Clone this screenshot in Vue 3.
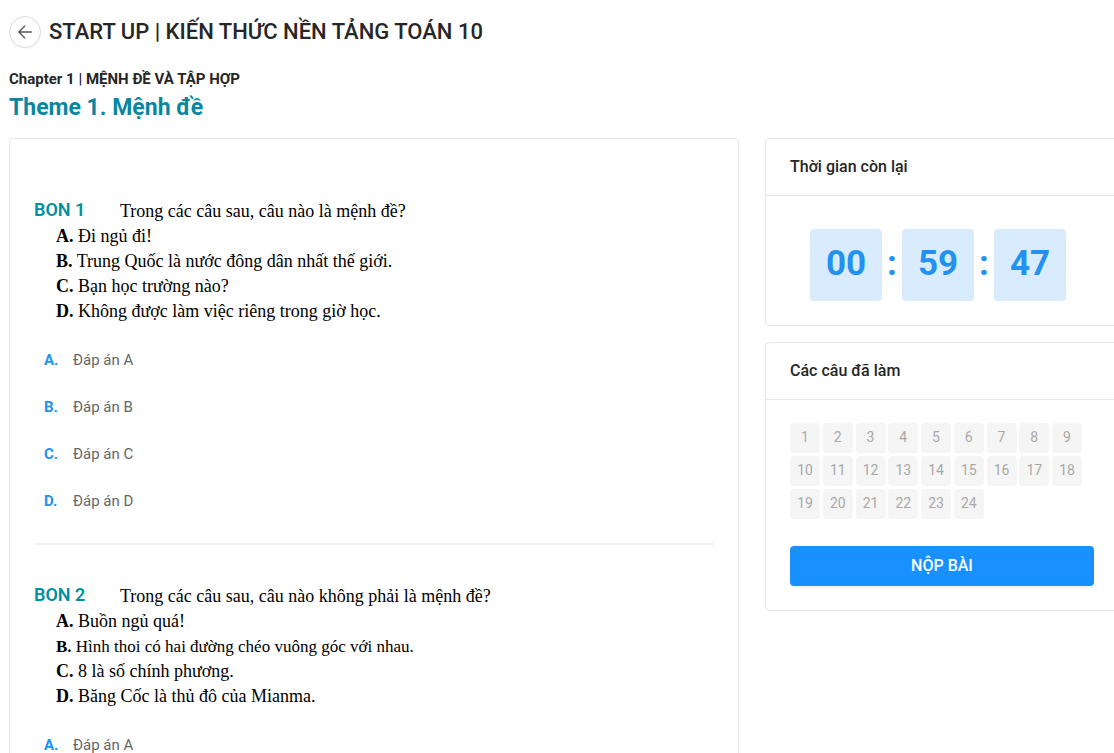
<script setup>
import { ref } from 'vue'

const letters = ['A', 'B', 'C', 'D']

const questions = [
  {
    id: 1,
    text: 'Trong các câu sau, câu nào là mệnh đề?',
    statements: [
      { text: 'Đi ngủ đi!' },
      { text: 'Trung Quốc là nước đông dân nhất thế giới.' },
      { text: 'Bạn học trường nào?' },
      { text: 'Không được làm việc riêng trong giờ học.' }
    ],
    options: ['A', 'B', 'C', 'D']
  },
  {
    id: 2,
    text: 'Trong các câu sau, câu nào không phải là mệnh đề?',
    statements: [
      { text: 'Buồn ngủ quá!' },
      { text: 'Hình thoi có hai đường chéo vuông góc với nhau.', compact: true },
      { text: '8 là số chính phương.' },
      { text: 'Băng Cốc là thủ đô của Mianma.' }
    ],
    options: ['A']
  }
]

const answers = ref({})
const questionCount = 24
</script>

<template>
  <div class="page">
    <header class="page-header">
      <button class="back" type="button" aria-label="Quay lại">
        <svg viewBox="0 0 16 16" width="16" height="16" aria-hidden="true">
          <path d="M8 1.8 1.8 8 8 14.2M1.8 8H14.8" />
        </svg>
      </button>
      <h1>START UP | KIẾN THỨC NỀN TẢNG TOÁN 10</h1>
    </header>

    <p class="chapter">Chapter 1 | MỆNH ĐỀ VÀ TẬP HỢP</p>
    <h2 class="theme">Theme 1. Mệnh đề</h2>

    <div class="columns">
      <main class="card questions">
        <section v-for="q in questions" :key="q.id" class="question">
          <div class="prompt">
            <p class="prompt-line">
              <strong class="tag">BON {{ q.id }}</strong>
              <span>{{ q.text }}</span>
            </p>
            <p
              v-for="(s, i) in q.statements"
              :key="i"
              class="statement"
              :class="{ compact: s.compact }"
            >
              <b>{{ letters[i] }}.</b> {{ s.text }}
            </p>
          </div>
          <div class="options">
            <button
              v-for="l in q.options"
              :key="l"
              type="button"
              class="option"
              :aria-pressed="answers[q.id] === l"
              @click="answers[q.id] = l"
            >
              <span class="letter">{{ l }}.</span>
              <span>Đáp án {{ l }}</span>
            </button>
          </div>
        </section>
      </main>

      <aside class="side">
        <section class="card">
          <h3>Thời gian còn lại</h3>
          <div class="card-body">
            <div class="timer">
              <span class="digits">00</span>
              <span class="colon">:</span>
              <span class="digits">59</span>
              <span class="colon">:</span>
              <span class="digits">47</span>
            </div>
          </div>
        </section>

        <section class="card">
          <h3>Các câu đã làm</h3>
          <div class="card-body progress">
            <div class="numbers">
              <button
                v-for="n in questionCount"
                :key="n"
                type="button"
                class="number"
                :class="{ done: answers[n] }"
              >{{ n }}</button>
            </div>
            <button class="submit" type="button">NỘP BÀI</button>
          </div>
        </section>
      </aside>
    </div>
  </div>
</template>

<style>
html,
body {
  background: #fff;
}
body {
  height: 100vh;
  overflow: hidden;
}
</style>

<style scoped>
.page {
  padding: 16px 0 0 9px;
  color: #262626;
  font-family: Roboto, "Liberation Sans", sans-serif;
  font-size: 15px;
}
h1,
h2,
h3,
p {
  margin: 0;
}
button {
  font-family: inherit;
  cursor: pointer;
}
.page-header {
  display: flex;
  align-items: center;
  gap: 8px;
  height: 32px;
}
.back {
  box-sizing: border-box;
  display: flex;
  align-items: center;
  justify-content: center;
  width: 32px;
  height: 32px;
  padding: 0;
  border: 1px solid #d9d9d9;
  border-radius: 50%;
  background: #fff;
  box-shadow: 0 2px 0 rgba(0, 0, 0, 0.015);
}
.back svg {
  fill: none;
  stroke: #555;
  stroke-width: 1.3;
}
h1 {
  font-size: 22px;
  font-weight: 500;
  line-height: 32px;
}
.chapter {
  margin-top: 20px;
  font-size: 15px;
  font-weight: 700;
  line-height: 22px;
}
.theme {
  color: #0887a0;
  font-size: 23px;
  font-weight: 700;
  line-height: 36px;
}
.columns {
  display: grid;
  grid-template-columns: 730fr 354fr;
  align-items: start;
  gap: 26px;
  margin-top: 12px;
  margin-right: -5px;
}
.card {
  border: 1px solid #e8e8e8;
  border-radius: 4px;
  background: #fff;
}
.questions {
  padding: 60px 24px 24px;
}
.question + .question {
  margin-top: 19px;
  padding-top: 39px;
  border-top: 2px solid #f0f0f0;
}
.prompt {
  color: #000;
  font-family: "Palatino Linotype", Palatino, "Liberation Serif", serif;
  font-size: 18px;
  line-height: 25px;
}
.prompt-line {
  display: flex;
}
.tag {
  flex: 0 0 86px;
  color: #0090a0;
  font-family: Roboto, sans-serif;
  font-size: 18px;
  font-weight: 600;
  line-height: 22px;
}
.statement {
  padding-left: 22px;
}
.compact {
  font-size: 17px;
}
.options {
  display: grid;
  margin-top: 12px;
}
.option {
  display: flex;
  align-items: center;
  height: 47px;
  padding: 0 10px;
  border: 0;
  background: none;
  color: #666;
  font-size: 15px;
  text-align: left;
}
.letter {
  flex: 0 0 29px;
  color: #2391f0;
  font-weight: 700;
}
.side {
  display: grid;
  gap: 16px;
}
h3 {
  padding: 16px 24px;
  border-bottom: 1px solid #e8e8e8;
  font-size: 16px;
  font-weight: 500;
  line-height: 24px;
}
.card-body {
  padding: 24px;
}
.progress {
  padding-top: 23px;
}
.timer {
  display: flex;
  padding: 9px 0 0 20px;
  color: #2391f0;
  font-size: 35px;
  font-weight: 700;
  line-height: 70px;
  text-align: center;
}
.digits {
  width: 72px;
  height: 72px;
  border-radius: 4px;
  background: #d9ecff;
}
.colon {
  width: 20px;
}
.numbers {
  display: grid;
  grid-template-columns: repeat(9, 30px);
  justify-content: space-between;
  row-gap: 3px;
  max-width: 292px;
}
.number {
  height: 30px;
  padding: 0 0 2px;
  border: 0;
  border-radius: 4px;
  background: #f5f5f5;
  color: #a8a8a8;
  font-size: 14px;
  font-weight: 400;
}
.number.done {
  background: #1890ff;
  color: #fff;
}
.submit {
  width: 100%;
  height: 40px;
  margin-top: 27px;
  padding: 0 0 2px;
  border: 0;
  border-radius: 4px;
  background: #1890ff;
  box-shadow: 0 2px 0 rgba(0, 0, 0, 0.045);
  color: #fff;
  font-size: 16px;
  font-weight: 500;
}
</style>
